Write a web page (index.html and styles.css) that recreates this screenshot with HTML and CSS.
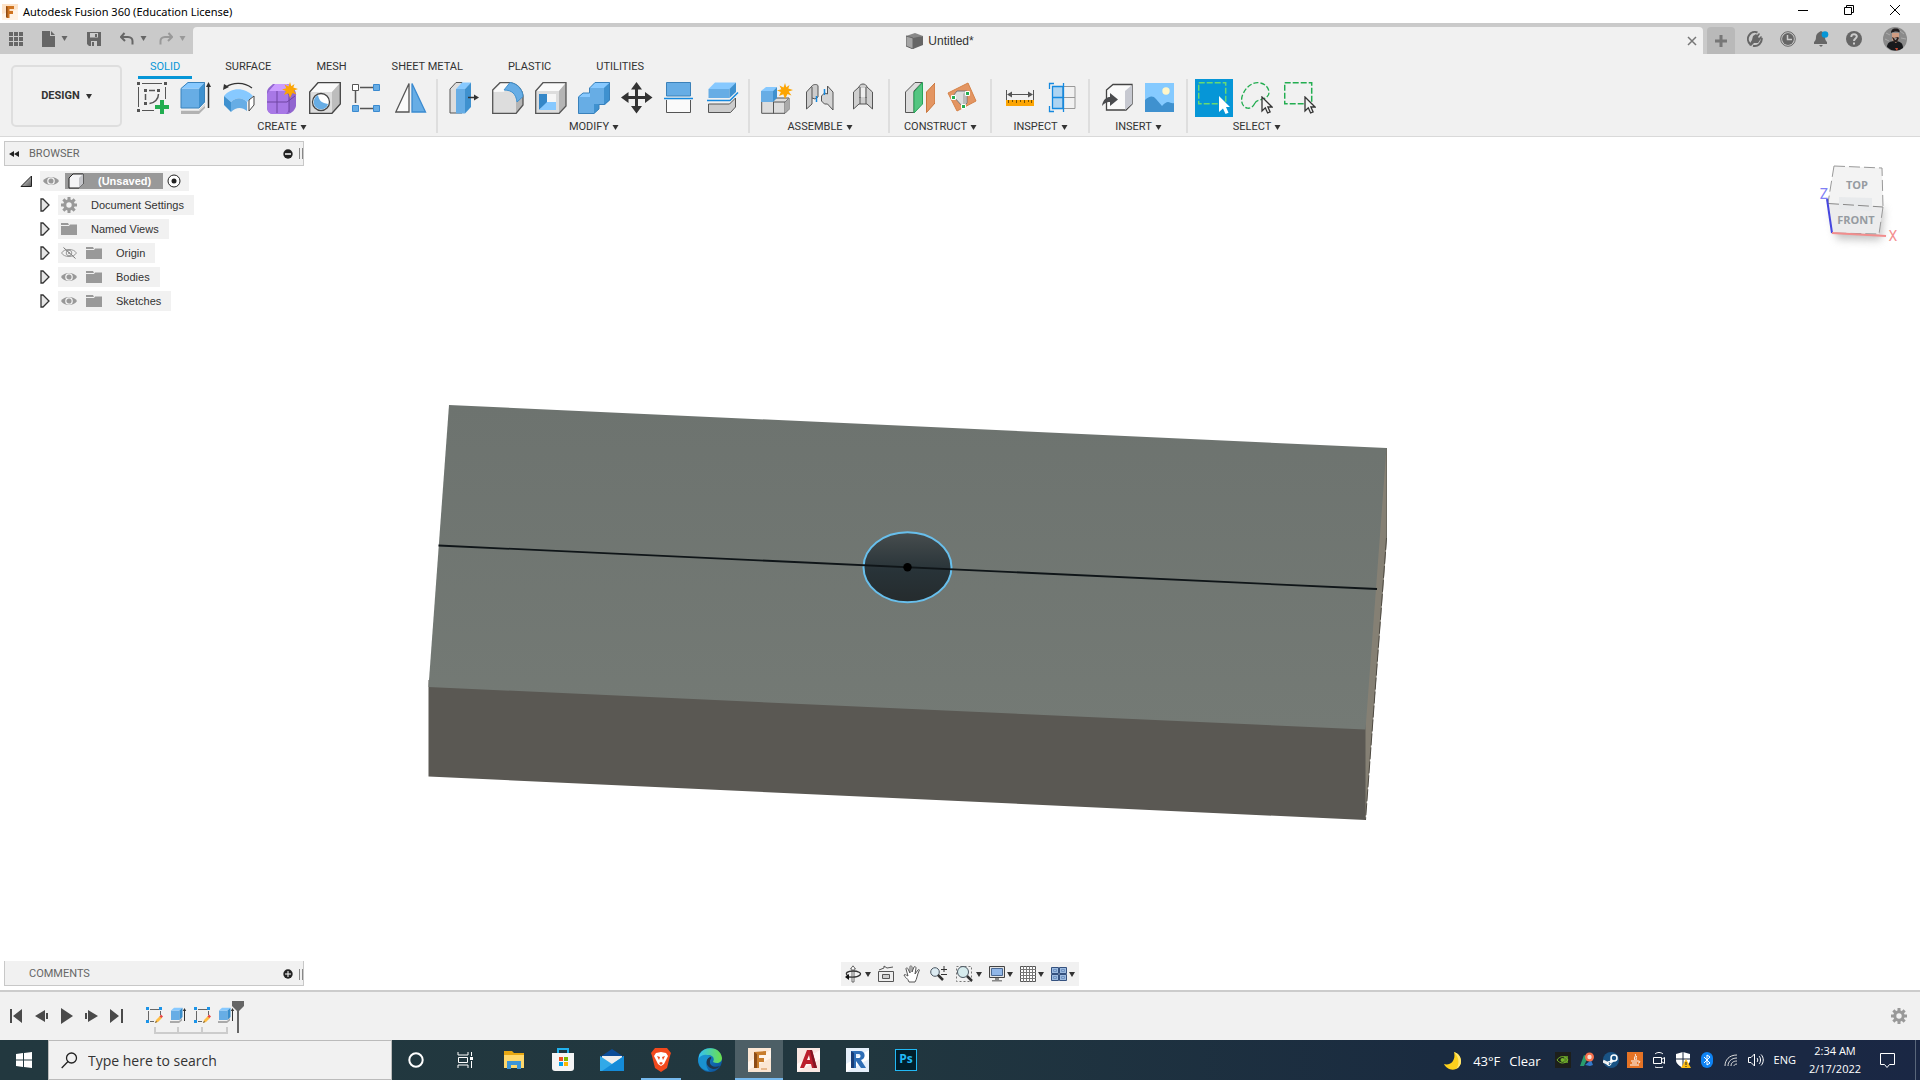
FILE: index.html
```html
<!DOCTYPE html>
<html lang="en">
<head>
<meta charset="utf-8">
<title>Autodesk Fusion 360 (Education License)</title>
<link rel="stylesheet" href="styles.css">
</head>
<body>
<svg class="defs" aria-hidden="true">
  <defs>
    <linearGradient id="triangleFill" x1="0" y1="0" x2="1" y2="1"><stop offset="0" stop-color="#eee"/><stop offset="1" stop-color="#555"/></linearGradient>
    <linearGradient id="topFace" x1="0" y1="0" x2="0" y2="1"><stop offset="0" stop-color="#6d736f"/><stop offset="1" stop-color="#747a75"/></linearGradient>
    <linearGradient id="holeFill" x1="0" y1="0" x2="0" y2="1"><stop offset="0" stop-color="#474d4e"/><stop offset="0.55" stop-color="#283338"/><stop offset="1" stop-color="#252b2d"/></linearGradient>
    <linearGradient id="edgeGreen" x1="0" y1="0" x2="1" y2="0"><stop offset="0" stop-color="#35c1f1"/><stop offset="1" stop-color="#6be04a"/></linearGradient>
    <linearGradient id="edgeBlue" x1="0" y1="0" x2="1" y2="1"><stop offset="0" stop-color="#1a9be0"/><stop offset="1" stop-color="#0c4a92"/></linearGradient>
  </defs>
  <symbol id="caret" viewBox="0 0 6 5"><path d="M0 0h6L3 5z" fill="currentColor"/></symbol>
  <symbol id="eye" viewBox="0 0 16 12"><path d="M0 6C3 .8 13 .8 16 6 13 11.200 3 11.200 0 6z" fill="#999"/><circle cx="8" cy="6" r="3.200" fill="none" stroke="#f1f1f1" stroke-width="1.300"/></symbol>
  <symbol id="eye-off" viewBox="0 0 16 12"><path d="M.6 6C3 1.300 13 1.300 15.400 6 13 10.700 3 10.700.6 6z" fill="none" stroke="#999"/><circle cx="8" cy="6" r="2.800" fill="none" stroke="#999"/><circle cx="8" cy="6" r="1" fill="#999"/><path d="M2.500.5l12 11" stroke="#777"/></symbol>
  <symbol id="folder" viewBox="0 0 16 14"><path d="M0 1h7l1 2H0zM0 4h8l1-1.500h7V13H0z" fill="#999"/></symbol>
  <symbol id="gear" viewBox="0 0 16 16"><g fill="#999"><path d="M6.500 0h3v16h-3zM0 6.500h16v3H0z"/><path d="M6.500 0h3v16h-3zM0 6.500h16v3H0z" transform="rotate(45 8 8)"/><circle cx="8" cy="8" r="5.700"/></g><circle cx="8" cy="8" r="2.700" fill="#f1f1f1"/></symbol>
  <symbol id="twisty" viewBox="0 0 10 14"><path d="M1 1h2l6 6-6 6H1z" fill="#e6e6e6" stroke="#333" stroke-width="1.300"/></symbol>
  <symbol id="burst" viewBox="0 0 16 16"><path d="M8 0l1.300 4.300L12.500 2l-1.200 3.600L16 7l-4.300 1.500 2.800 4-4-1.600L8 16l-1.700-4.800L2 13l1.900-4L0 7.500l4.300-1.300L2.500 2.500l4 1.900z" fill="#fca503"/></symbol>
  <symbol id="pointer" viewBox="0 0 12 18"><path d="M1 1v14l3.300-3.200L6.600 17l2.500-1.100L6.900 11H11z" fill="#f3f3f3" stroke="#333" stroke-width="1.300"/></symbol>
  <symbol id="sketch-small" viewBox="0 0 17 17"><path d="M2.500 4v9M4 2.500h9M14.500 4v4M4 14.500h4" stroke="#666" fill="none"/><path d="M0 0h3v3H0zM13 0h3v3h-3zM0 13h3v3H0z" fill="#1c94e8"/><path d="M9 16l1-3 4-4 2 2-4 4z" fill="#ffbd42"/><path d="M13.500 9.500l1.500-2 2 2-1.500 1.500z" fill="#e84343"/><path d="M9 16l1-2 1 1z" fill="#444"/></symbol>
  <symbol id="extrude-small" viewBox="0 0 17 17"><path d="M0 16v-2h9l3-3v2.500L9 16z" fill="#aaa"/><path d="M1 3.500h8.500V13H1z" fill="#67ade5"/><path d="M1 3.500L4 .7h8.500l-3 2.800z" fill="#87c9ff"/><path d="M9.500 3.500l3-2.800V10l-3 3z" fill="#388dcc"/><path d="M14.500 14V3" stroke="#333"/><path d="M12.800 4l1.700-3 1.700 3z" fill="#333"/></symbol>
</svg>

<header class="titlebar">
  <svg width="16" height="16" viewBox="0 0 16 16"><path fill="#fde3c9" d="M0 0h16v16H0z"/><path fill="#fff3e6" d="M0 10l16-5v11H0z"/><path fill="#cf7421" d="M4 2h8v3H7.500v2H11v3H7.500v4H4.500z"/><path fill="#8e4a13" d="M4 2l1.500 1v11L4 13z"/></svg>
  <h1>Autodesk Fusion 360 (Education License)</h1>
  <div class="window-controls">
    <button aria-label="Minimize"><svg width="12" height="12"><path d="M1 6.500h10" stroke="#000"/></svg></button>
    <button aria-label="Restore"><svg width="12" height="12"><path d="M1.500 3.500h7v7h-7zM3.500 3V1.500h7v7H9" fill="none" stroke="#000"/></svg></button>
    <button aria-label="Close"><svg width="12" height="12"><path d="M1 1l10 10M11 1L1 11" stroke="#000"/></svg></button>
  </div>
</header>

<div class="appbar">
  <nav class="quick">
    <button aria-label="Data panel"><svg width="14" height="14" fill="#666"><path d="M0 0h4v4H0zM5 0h4v4H5zM10 0h4v4h-4zM0 5h4v4H0zM5 5h4v4H5zM10 5h4v4h-4zM0 10h4v4H0zM5 10h4v4H5zM10 10h4v4h-4z"/></svg></button>
    <button aria-label="File"><svg width="13" height="16" fill="#666"><path d="M0 0h8v5h5v11H0zM9 0l4 4H9z"/></svg><svg class="caret" width="7" height="5"><use href="#caret"/></svg></button>
    <button aria-label="Save"><svg width="14" height="14"><path d="M0 0h14v14H2l-2-2z" fill="#666"/><path d="M3 1h8v4.500H3zM4 9h6v5H4z" fill="#ccc"/><path d="M8 2h2v3H8zM5 10h2v4H5z" fill="#666"/></svg></button>
    <button aria-label="Undo"><svg width="14" height="13"><path d="M4.500 1L1 5l4 4M1.500 5H8c3 0 4.500 2 4.500 4v3.500" fill="none" stroke="#666" stroke-width="2"/></svg><svg class="caret" width="7" height="5"><use href="#caret"/></svg></button>
    <button aria-label="Redo" class="dim"><svg width="14" height="13"><path d="M9.500 1L13 5 9 9M12.500 5H6c-3 0-4.500 2-4.500 4v3.500" fill="none" stroke="#999" stroke-width="2"/></svg><svg class="caret" width="7" height="5"><use href="#caret"/></svg></button>
  </nav>
  <div class="doc-tab">
    <div class="doc-name"><svg width="17" height="16" viewBox="0 0 17 16"><path d="M0 3L9 0l8 3-8 3z" fill="#888"/><path d="M0 3l7 2v11l-7-3z" fill="#a5a5a5" stroke="#666"/><path d="M7 5l10-2v9l-10 4z" fill="#666"/></svg><span>Untitled*</span></div>
    <button aria-label="Close document"><svg width="10" height="10"><path d="M1 1l8 8M9 1L1 9" stroke="#777" stroke-width="1.500"/></svg></button>
  </div>
  <button class="new-tab" aria-label="New design"><svg width="14" height="14"><path d="M7 1v12M1 7h12" stroke="#777" stroke-width="3"/></svg></button>
  <nav class="account">
    <button aria-label="Extensions"><svg width="16" height="16" viewBox="0 0 16 16"><path d="M10.500 1.500A7 7 0 0 0 3 13M6 14.700A7 7 0 0 0 14.700 7" fill="none" stroke="#666" stroke-width="2"/><path d="M2 14l3-5 1-4 3-2 1 1 2-2 1 1-2 3 1 1 2-2 1 1-2 3-2 3-4 0-3 3z" fill="#666"/></svg></button>
    <button aria-label="Job status"><svg width="16" height="16"><circle cx="8" cy="8" r="7.300" fill="none" stroke="#666"/><circle cx="8" cy="8" r="5.900" fill="#666"/><path d="M7.500 4v4.500H12" fill="none" stroke="#ccc" stroke-width="1.500"/></svg></button>
    <button aria-label="Notifications"><svg width="16" height="16"><path d="M8 0c3 1 4 3 4 6 0 3 1 4 2 5v2H1v-2c1-1 2-2 2-5 0-3 2-4.500 5-6zM6 14h4l-2 2z" fill="#666"/><circle cx="12" cy="3.500" r="3.300" fill="#0696d7"/></svg></button>
    <button aria-label="Help"><svg width="16" height="16"><circle cx="8" cy="8" r="8" fill="#666"/><path d="M5.300 6c0-4 5.500-3.500 5.500-.4C10.800 7.500 8 7.500 8 10M8 11.500v2" fill="none" stroke="#ccc" stroke-width="2"/></svg></button>
    <button aria-label="Profile"><svg width="24" height="24" viewBox="0 0 24 24"><circle cx="12" cy="12" r="12" fill="#8a8a8a"/><path d="M3 6l4 2M17 4l4 3M18 11l5 1M2 12l4 2" stroke="#aaa"/><path d="M4 20c0-4 3-6 8-6s8 2 8 7a12 12 0 0 1-16-1z" fill="#18191c"/><path d="M9 6h7v6l-3 4-4-3z" fill="#cf9c82"/><path d="M8 6c0-4 3-5 5-4.500 3 0 4 2 3.500 4-2-1.500-5-1.500-8.500.5z" fill="#211d1e"/><path d="M9 10l2 1 4-1 1 1-2 4h-3z" fill="#2b2220"/><path d="M11 11.500h3l-1 1h-1z" fill="#fff"/><path d="M12 21l3 0-1 3z" fill="#ca4a32"/></svg></button>
  </nav>
</div>

<section class="ribbon">
  <button class="workspace">DESIGN<svg class="caret" width="6" height="5"><use href="#caret"/></svg></button>
  <div class="ribbon-main">
    <nav class="tabs">
      <button class="current">SOLID</button><button>SURFACE</button><button>MESH</button><button>SHEET METAL</button><button>PLASTIC</button><button>UTILITIES</button>
    </nav>
    <div class="groups">
      <div class="group">
        <div class="tools">
          <button aria-label="Create sketch"><svg width="32" height="32"><path d="M5 1.500h20M1.500 5v20M28.500 5v12M5 28.500h12" stroke="#555" fill="none"/><path d="M0 0h3v3H0zM27 0h3v3h-3zM0 27h3v3H0zM7 7h3v3H7zM20 7h3v3h-3zM7 20h3v3H7z" fill="#555"/><path d="M12 8.500h6M8.500 12v6M21.500 12c0 5-4 9-9 9.500" stroke="#555" stroke-width="1.500" fill="none"/><path d="M23 18h4v5h5v4h-5v5h-4v-5h-5v-4h5z" fill="#22ad50"/></svg></button>
          <button aria-label="Extrude"><svg width="32" height="32"><path d="M1 32v-4h18l6-6v4l-6 6z" fill="#b2b2b2"/><path d="M1 28h18l6-6v2l-6 5H1z" fill="#e0e0e0"/><path d="M1 6.500h18V26H1z" fill="#67ade5"/><path d="M1 6.500L8 0h17l-6 6.500z" fill="#87c9ff"/><path d="M19 6.500L25 0v20l-6 6z" fill="#3f91cf"/><path d="M1 6.500L8 .5h16.500V20L19 26H1z" fill="none" stroke="#3a82bb"/><path d="M28.500 26V4" stroke="#333" stroke-width="1.500"/><path d="M26 5l2.500-5L31 5z" fill="#333"/></svg></button>
          <button aria-label="Revolve"><svg width="32" height="32"><path d="M1 14c7-9 21-9 29 0l-6 6c-5-5-11-5-16 0z" fill="#87c9ff"/><path d="M1 14l7 6v10l-7-7z" fill="#3f91cf"/><path d="M8 20c5-5 11-5 16 0v9c-5-4-11-4-16 1z" fill="#67ade5"/><path d="M26 18l5-4v9l-5 6z" fill="#fff" stroke="#444"/><path d="M3 5c7-5 18-5 26 1" fill="none" stroke="#333" stroke-width="1.300"/><path d="M0 8l1-6 5 3z" fill="#333"/></svg></button>
          <button aria-label="Create form"><svg width="32" height="32"><path d="M1 10c0-2 1-4 6-8h15c7 4 8 8 8 11v11c-1 4-4 7-8 8H7c-4 0-6-3-6-7z" fill="#9165cf"/><path d="M1 12l2-3h17l3 3v16l-3 4H7c-4 0-6-3-6-7z" fill="#a878e6"/><path d="M3 9l6-7h12l4 2-5 5z" fill="#cb9dff"/><path d="M11 9v22M1 20h20l8-6M20 9l3 4v17" fill="none" stroke="#6e45a2"/><use href="#burst" x="16" y="0" width="16" height="16"/></svg></button>
          <button aria-label="Hole"><svg width="32" height="32"><path d="M.7 10L9 .7h22.300V22L23 31.300H.7z" fill="#ddd"/><path d="M.7 10L9 .7h22.300L23 10z" fill="#fafafa"/><path d="M23 10l8.300-9.300V22L23 31.300z" fill="#bdbdbd"/><path d="M.7 10L9 .7h22.300V22L23 31.300H.7z" fill="none" stroke="#444" stroke-width="1.300"/><circle cx="12" cy="20" r="8.500" fill="#fff" stroke="#444" stroke-width="1.300"/><path d="M9 13c1 6 4 8 10 9-2 8-13 6-14 0-1-5 2-8 4-9z" fill="#67ade5"/></svg></button>
          <button aria-label="Pattern"><svg width="32" height="32"><path d="M8 5.500h13M3.500 9v12M8 26.500h13" stroke="#555" stroke-width="1.500"/><path d="M.5 2.500h6v6h-6z" fill="#fff" stroke="#555"/><path d="M21.500 2.500h6v6h-6zM21.500 23.500h6v6h-6zM.5 23.500h6v6h-6z" fill="#67ade5" stroke="#3a8ad0"/></svg></button>
          <button aria-label="Mirror"><svg width="32" height="32"><path d="M14 1.500V30H.8z" fill="#fafafa" stroke="#555" stroke-width="1.300"/><path d="M17 1.500V30h13.500z" fill="#67ade5" stroke="#3a8ad0" stroke-width="1.300"/></svg></button>
        </div>
        <button class="menu">CREATE<svg class="caret" width="7" height="5"><use href="#caret"/></svg></button>
      </div>
      <div class="group">
        <div class="tools">
          <button aria-label="Press pull"><svg width="32" height="32"><path d="M1 7l6-6.500h6V31H1z" fill="#ddd" stroke="#555"/><path d="M7 7h9v24.500H7z" fill="#67ade5"/><path d="M7 7l6-6.500h9L16 7z" fill="#87c9ff"/><path d="M16 7l6-6.500V25l-6 6.500z" fill="#3f91cf"/><path d="M19 15.500h7" stroke="#333" stroke-width="1.500"/><path d="M25 12.500l5 3-5 3z" fill="#333"/></svg></button>
          <button aria-label="Fillet"><svg width="32" height="32"><path d="M.7 10L9 .7h10C28 2 31 10 31 14v9l-7 8.500H.7z" fill="#ddd"/><path d="M.7 10L9 .7h10l-7 9z" fill="#fafafa"/><path d="M24 20l7-9v12l-7 8.500z" fill="#b5b5b5"/><path d="M.7 8L8 .7h10C27 2 31 10 31 14v9l-7 8.500H.7z" fill="none" stroke="#555" stroke-width="1.300"/><path d="M12 8l6-7.500c8 1 13 8 13 14L25 20C24 12 20 8 12 8z" fill="#67ade5" stroke="#3f91cf"/></svg></button>
          <button aria-label="Shell"><svg width="32" height="32"><path d="M.7 9L8 .7h23V24l-7 7.500H.7z" fill="#ddd"/><path d="M.7 9L8 .7h23L24 9z" fill="#fafafa"/><path d="M24 9l7-8.300V24l-7 7.500z" fill="#b5b5b5"/><path d="M.7 9L8 .7h23V24l-7 7.500H.7z" fill="none" stroke="#555" stroke-width="1.300"/><path d="M4 12h17v16H4z" fill="#f6f6f6"/><path d="M4 12h8v9l-8 7z" fill="#3487c8"/><path d="M4 28l8-8h9v8z" fill="#87c9ff"/></svg></button>
          <button aria-label="Combine"><svg width="32" height="32"><path d="M0 15l5-4h7V6l5-5.500h15V18l-5 5h-6v4l-5 4.500H0z" fill="#67ade5"/><path d="M0 15l5-4h7v4zM12 6l5-5.500h15L26 6z" fill="#87c9ff"/><path d="M26 6l6-5.500V18l-6 5zM16 27v-5h5v5l-5 4.500z" fill="#3f91cf"/><path d="M.5 15L5 11h6.500V6L17 .5h14.500V18L26 22.500h-5V27l-5 4.500H.5z" fill="none" stroke="#3981bb"/></svg></button>
          <button aria-label="Move"><svg width="32" height="32"><path d="M15.500 5v22M5 15.500h22" stroke="#333" stroke-width="3"/><path d="M10 7.500L15.500 0 21 7.500zM10 24l5.500 7.500L21 24zM7.500 10L0 15.500 7.500 21zM24 10l7.500 5.500L24 21z" fill="#333"/></svg></button>
          <button aria-label="Split face"><svg width="32" height="32"><path d="M2.500.5h24V14h-24z" fill="#67ade5" stroke="#3b81b9"/><path d="M2.500 18v12.500h24V18" fill="#fafafa" stroke="#555"/><path d="M0 16.500h29" stroke="#1489df" stroke-width="1.500"/></svg></button>
          <button aria-label="Split body"><svg width="32" height="32"><path d="M1.500 22h21l6-6v9l-5 5.500h-22z" fill="#ccc" stroke="#555"/><path d="M1.500 7h21v9h-21z" fill="#67ade5"/><path d="M1.500 7L8 .5h21L23 7z" fill="#87c9ff"/><path d="M22.500 7L29 .5V10l-6.500 6z" fill="#3f91cf"/><path d="M0 18.500h23l8-8" stroke="#1489df" fill="none" stroke-width="1.500"/></svg></button>
        </div>
        <button class="menu">MODIFY<svg class="caret" width="7" height="5"><use href="#caret"/></svg></button>
      </div>
      <div class="group">
        <div class="tools">
          <button aria-label="New component"><svg width="32" height="32"><path d="M.7 19v12.300H24l4-4V16H13z" fill="#ddd" stroke="#555"/><path d="M12.500 19.500v12M12.500 20H24v11M24 20l4-4" stroke="#555" fill="none"/><path d="M24 20l4-4v11l-4 4z" fill="#aaa"/><path d="M0 9h12v11H0z" fill="#67ade5"/><path d="M0 9l5-4h11l-4 4z" fill="#87c9ff"/><path d="M12 9l4-4v11l-4 4z" fill="#3f91cf"/><use href="#burst" x="16" y="1" width="16" height="16"/></svg></button>
          <button aria-label="Joint"><svg width="32" height="32"><path d="M2.500 10L8 4c1-2 6-2 6 0v11l-3 2-3-1v6l-5.500 5z" fill="#ccc" stroke="#555"/><path d="M8 5v11M17.500 14l3-3 3 1V4l5.500 6v18l-5.500-6h-3l-3-3z" fill="#d4d4d4" stroke="#555"/><path d="M12.500 14v6M20.500 7v6" stroke="#1489df" stroke-width="1.500"/></svg></button>
          <button aria-label="As-built joint"><svg width="32" height="32"><path d="M6.500 10L12 5c1-4 7-4 8 0l5.500 5v17L20 22h-8l-5.500 5z" fill="#cfcfcf" stroke="#555"/><path d="M13 5v11M19 5v11M13 15v7M19 15v7" stroke="#555"/><path d="M14 6h4v9h-4z" fill="#eee"/></svg></button>
        </div>
        <button class="menu">ASSEMBLE<svg class="caret" width="7" height="5"><use href="#caret"/></svg></button>
      </div>
      <div class="group wide">
        <div class="tools">
          <button aria-label="Offset plane"><svg width="32" height="32"><path d="M2.500 10L12 .5h7L11 9v21.500H2.500z" fill="#ddd" stroke="#555"/><path d="M11 10l8.500-9.500V22L11 31z" fill="#54c581" stroke="#25a557"/><path d="M23.500 10L32 1v20l-8.500 9.500z" fill="#e39562" stroke="#c9753b"/></svg></button>
          <button aria-label="Plane through points"><svg width="32" height="32"><path d="M2 11L22 1l8 18-19 10z" fill="#e39562" stroke="#d58247"/><path d="M7 14l4-5h10v12l-4 4z" fill="#ddd" stroke="#777"/><path d="M20 9v12l-3 4V12z" fill="#bbb"/><path d="M5.500 13.500h4v4h-4zM19.500 9.500h4v4h-4zM15.500 22.500h4v4h-4z" fill="#25ad50" stroke="#fff"/></svg></button>
        </div>
        <button class="menu">CONSTRUCT<svg class="caret" width="7" height="5"><use href="#caret"/></svg></button>
      </div>
      <div class="group pair">
        <div class="tools">
          <button aria-label="Measure"><svg width="32" height="32"><path d="M3.500 8v10M30.500 8v10M6 12.500h22" stroke="#555"/><path d="M4 12.500l5-3v6zM30 12.500l-5-3v6z" fill="#555"/><path d="M3 18h28v6H3z" fill="#fca503"/><path d="M5.500 18v3M9.500 18v2M13.500 18v3M17.500 18v2M21.500 18v3M25.500 18v2M28.500 18v3" stroke="#765000"/></svg></button>
          <button aria-label="Section analysis"><svg width="32" height="32"><path d="M6.500 4.500H17V27H6.500z" fill="#add4f2"/><path d="M17 4.500h12v22H17zM17 15.500h12" fill="none" stroke="#999"/><path d="M8 1.500H3.500V7M8 29.500H3.500V24M6.500 4.500H17v22H6.500zM6.500 15.500H17M17.500 1v29" fill="none" stroke="#1489df" stroke-width="1.300"/></svg></button>
        </div>
        <button class="menu">INSPECT<svg class="caret" width="7" height="5"><use href="#caret"/></svg></button>
      </div>
      <div class="group pair">
        <div class="tools">
          <button aria-label="Insert derive"><svg width="32" height="32"><path d="M5.500 8L12 2.500h19V22l-6 6H5.500z" fill="#fafafa" stroke="#444" stroke-width="1.300"/><path d="M24 9l7-6v19l-7 6z" fill="#c7c9d1"/><path d="M1 24c1-7 5-9 8-9v-4l8 6.500L9 24v-4c-4 0-5 1-8 4z" fill="#4a4b4e"/></svg></button>
          <button aria-label="Canvas"><svg width="32" height="32"><path d="M1 1h29v29H1z" fill="#85caff"/><circle cx="22" cy="9" r="3.700" fill="#fff6c9"/><path d="M1 18c4-4 8-5 11-1l6 7c3-3 4-4 6-4s4 2 6 1v9H1z" fill="#3f91cf"/></svg></button>
        </div>
        <button class="menu">INSERT<svg class="caret" width="7" height="5"><use href="#caret"/></svg></button>
      </div>
      <div class="group last">
        <div class="tools">
          <button class="chosen" aria-label="Select"><svg width="32" height="32"><path d="M.7.7h27v21H.7z" fill="none" stroke="#69da72" stroke-width="1.500" stroke-dasharray="6 2"/><path d="M21 14v16l4-3.500 2.500 5.500 3-1.300L28 25h4z" fill="#fff"/></svg></button>
          <button aria-label="Freeform select"><svg width="32" height="32"><path d="M14 21c-2 4-5 6-8 5-5-1-7-8-4-14C5 5 11 .5 17 .7c7 .3 11 5 11 10 0 3-3 6-8 7-3 1-5 1-6 3.300z" fill="none" stroke="#22ad50" stroke-width="1.300" stroke-dasharray="5 2"/><use href="#pointer" x="20" y="14" width="12" height="18"/></svg></button>
          <button aria-label="Window select"><svg width="32" height="32"><path d="M.7.7h27v21H.7z" fill="none" stroke="#22ad50" stroke-width="1.500" stroke-dasharray="6 2"/><use href="#pointer" x="20" y="14" width="12" height="18"/></svg></button>
        </div>
        <button class="menu">SELECT<svg class="caret" width="7" height="5"><use href="#caret"/></svg></button>
      </div>
    </div>
  </div>
</section>

<main class="viewport">
  <svg class="model" viewBox="0 137 1920 853" role="img" aria-label="Block with centre hole">
    <path d="M1386 448l1 90-21.500 282-8-91z" fill="#858074"/>
    <path d="M1386.500 448v90" stroke="#6d6a60"/>
    <path d="M1386.500 538l-21 282" fill="none" stroke="#4e4a42" stroke-dasharray="12 2"/>
    <path d="M428.500 680H1364.500L1365.500 729.500V820L428.500 776.500z" fill="#5a5853"/>
    <path d="M449 405L1386.500 448 1365.500 729.500 428.500 687z" fill="url(#topFace)"/>
    <ellipse cx="907.500" cy="567.300" rx="44" ry="35" fill="url(#holeFill)" stroke="#68bfec" stroke-width="2"/>
    <path d="M438.500 545.500L1377 589" stroke="#0f1518" stroke-width="1.800"/>
    <circle cx="907.500" cy="567.300" r="4.200" fill="#000"/>
  </svg>

  <svg class="viewcube" width="90" height="90" role="img" aria-label="View cube">
    <defs><filter id="soft" x="-30%" y="-30%" width="160%" height="160%"><feGaussianBlur stdDeviation="4"/></filter></defs>
    <path d="M16 50l53-2-3 32-44-1z" fill="#999" opacity=".6" filter="url(#soft)"/>
    <path d="M19 6l48 2 1 39-55-4z" fill="#f3f3f3"/>
    <path d="M13 43l55 4-4 27-47-1z" fill="#ececed"/>
    <path d="M24 37l33 1v13l-33-2z" fill="#e8eaec"/>
    <path d="M19 6l48 2 1 39M19 6l-6 37M68 47l-4 27-47-1" fill="none" stroke="#999" stroke-dasharray="11 4"/>
    <path d="M13 43.500l55 3.500" stroke="#888" stroke-dasharray="11 4"/>
    <path d="M12 39l5 34" stroke="#4747df" stroke-width="2"/>
    <path d="M17 73l54 3" stroke="#f28d8d" stroke-width="2"/>
    <g text-anchor="middle"><text x="42" y="29" class="cube-face">TOP</text><text x="41" y="64" class="cube-face">FRONT</text><text x="9" y="39" class="axis-z">Z</text><text x="78" y="81" class="axis-x">X</text></g>
  </svg>

  <aside class="browser">
    <div class="panel-head">
      <svg width="11" height="8"><path d="M5 1v6L0 4zM10 1v6L5 4z" fill="#222"/></svg><h2>BROWSER</h2>
      <button aria-label="Hide browser"><svg width="10" height="10"><circle cx="5" cy="5" r="4.700" fill="#222"/><path d="M2 5h6" stroke="#fff" stroke-width="1.500"/></svg></button><i class="grip"></i>
    </div>
    <ul class="tree">
      <li class="root"><svg width="12" height="12"><path d="M11.500 1v10.500H1z" fill="url(#triangleFill)" stroke="#222"/></svg>
        <span class="node"><svg width="16" height="12"><use href="#eye"/></svg>
          <strong><svg width="16" height="16"><path d="M1 5l4-4h10v10l-4 4H1z" fill="#f4f4f6" stroke="#222"/><path d="M11 5l4-4v10l-4 4z" fill="#c5c6ca"/></svg>(Unsaved)</strong>
          <svg width="14" height="14"><circle cx="7" cy="7" r="6" fill="#fff" stroke="#222"/><circle cx="7" cy="7" r="2.500" fill="#222"/></svg></span></li>
      <li><svg width="10" height="14"><use href="#twisty"/></svg><span class="node"><svg width="16" height="16"><use href="#gear"/></svg>Document Settings</span></li>
      <li><svg width="10" height="14"><use href="#twisty"/></svg><span class="node"><svg width="16" height="14"><use href="#folder"/></svg>Named Views</span></li>
      <li><svg width="10" height="14"><use href="#twisty"/></svg><span class="node"><svg width="16" height="12"><use href="#eye-off"/></svg><svg width="16" height="14"><use href="#folder"/></svg>Origin</span></li>
      <li><svg width="10" height="14"><use href="#twisty"/></svg><span class="node"><svg width="16" height="12"><use href="#eye"/></svg><svg width="16" height="14"><use href="#folder"/></svg>Bodies</span></li>
      <li><svg width="10" height="14"><use href="#twisty"/></svg><span class="node"><svg width="16" height="12"><use href="#eye"/></svg><svg width="16" height="14"><use href="#folder"/></svg>Sketches</span></li>
    </ul>
  </aside>

  <div class="bottom">
    <div class="panel-head comments"><h2>COMMENTS</h2>
      <button aria-label="Show comments"><svg width="10" height="10"><circle cx="5" cy="5" r="4.700" fill="#222"/><path d="M2 5h6M5 2v6" stroke="#fff"/></svg></button><i class="grip"></i></div>
    <nav class="navbar">
      <button class="spaced" aria-label="Orbit"><svg width="18" height="18"><path d="M8 17V4H6.500L9 .8 11.500 4H10v13z" stroke="#666" fill="#fff"/><path d="M4 11C0 8 4 6 9 6s9 2 7 4-5 2.500-11 2" fill="none" stroke="#333" stroke-width="1.300"/><path d="M1 12l4-3v6z" fill="#111"/></svg><svg class="caret" width="6" height="5"><use href="#caret"/></svg></button>
      <button aria-label="Look at"><svg width="18" height="18"><path d="M1.500 6.500h15v10h-15zM2 5l5-2V1l3 2 6-1" fill="#eee" stroke="#555"/><path d="M5.500 9.500h7v4h-7z" fill="#ccc" stroke="#555"/></svg></button>
      <button aria-label="Pan"><svg width="18" height="18"><path d="M6 17c-1-4-5-5-5-7 1-1 2 0 4 1L3 4c0-2 2-1 2 0l2 4V2c0-2 2-1 2 0v5l2-5c1-1 2 0 2 1l-1 6 3-4c1-1 2 0 1 1-2 4-2 8-4 11z" fill="#fff" stroke="#555"/></svg></button>
      <button aria-label="Zoom"><svg width="18" height="18"><circle cx="6" cy="7" r="4.300" fill="#dcebf2" stroke="#4b5661"/><path d="M9 10l5 5" stroke="#333" stroke-width="2.500"/><path d="M12 4.500h6M15 1v6M12 9.500h6" stroke="#333"/></svg></button>
      <button class="fit" aria-label="Fit"><svg width="18" height="18"><path d="M1.500 1.500h15v15h-15z" fill="none" stroke="#777" stroke-dasharray="2 2"/><circle cx="8" cy="7" r="5.500" fill="#d6ebed" stroke="#4b5661"/><path d="M12 11l5 5" stroke="#333" stroke-width="2.500"/></svg><svg class="caret" width="6" height="5"><use href="#caret"/></svg></button>
      <button aria-label="Display settings"><svg width="18" height="18"><path d="M1.500 1.500h15v11h-15z" fill="#e4e4e4" stroke="#444"/><path d="M3.500 3.500h11v7h-11z" fill="#91b7e8" stroke="#4b6a95"/><path d="M7 13h4v2h3v1.500H4V15h3z" fill="#888"/></svg><svg class="caret" width="6" height="5"><use href="#caret"/></svg></button>
      <button aria-label="Grid"><svg width="18" height="18"><path d="M1.500 1.500h15v15h-15z" fill="#fff" stroke="#555"/><path d="M4.500 1v16M7.500 1v16M10.500 1v16M13.500 1v16M1 4.500h16M1 7.500h16M1 10.500h16M1 13.500h16" stroke="#777"/></svg><svg class="caret" width="6" height="5"><use href="#caret"/></svg></button>
      <button aria-label="Viewports"><svg width="18" height="18"><path d="M1.500 2.500h7v6h-7zM9.500 2.500h7v6h-7zM1.500 9.500h7v6h-7zM9.500 9.500h7v6h-7z" fill="#9dbbe0" stroke="#34517f"/><path d="M3.500 4.500h3v2h-3zM11.500 4.500h3v2h-3zM3.500 11.500h3v2h-3zM11.500 11.500h3v2h-3z" fill="none" stroke="#6f92c2"/></svg><svg class="caret" width="6" height="5"><use href="#caret"/></svg></button>
    </nav>
  </div>
</main>

<footer class="timeline">
  <nav class="playback">
    <button aria-label="Start"><svg width="13" height="14" fill="#4a4a4a"><path d="M0 0h2v14H0zM12 0v14L3 7z"/></svg></button>
    <button aria-label="Previous"><svg width="13" height="14" fill="#4a4a4a"><path d="M10 1v12L0 7zM11 4h2v6h-2z"/></svg></button>
    <button aria-label="Play"><svg width="13" height="16" fill="#4a4a4a"><path d="M1 0l12 8L1 16z"/></svg></button>
    <button aria-label="Next"><svg width="13" height="14" fill="#4a4a4a"><path d="M3 1v12l10-6zM0 4h2v6H0z"/></svg></button>
    <button aria-label="End"><svg width="13" height="14" fill="#4a4a4a"><path d="M11 0h2v14h-2zM0 0v14l9-7z"/></svg></button>
  </nav>
  <div class="features">
    <div class="steps">
      <button aria-label="Sketch1"><svg width="17" height="17"><use href="#sketch-small"/></svg></button>
      <button aria-label="Extrude1"><svg width="17" height="17"><use href="#extrude-small"/></svg></button>
      <button aria-label="Sketch2"><svg width="17" height="17"><use href="#sketch-small"/></svg></button>
      <button aria-label="Extrude2"><svg width="17" height="17"><use href="#extrude-small"/></svg></button>
    </div>
    <svg width="96" height="7"><path d="M13 0v6h72V0M36 0v6M60 0v6" fill="none" stroke="#ccc" stroke-width="2"/></svg>
    <svg class="playhead" width="12" height="32"><path d="M0 0h12v5L7 10v22H5V10L0 5z" fill="#666"/></svg>
  </div>
  <button class="settings" aria-label="Timeline settings"><svg width="16" height="16"><use href="#gear"/></svg></button>
</footer>

<div class="taskbar">
  <button class="start" aria-label="Start menu"><svg width="16" height="16" fill="#fff"><path d="M0 2l7-1v6.500H0zM8 1l8-1v7.500H8zM0 8.500h7V15l-7-1zM8 8.500h8V16l-8-1z"/></svg></button>
  <label class="search"><svg width="17" height="17"><circle cx="10.500" cy="6" r="5" fill="none" stroke="#222" stroke-width="1.300"/><path d="M7 9.500L.7 16" stroke="#222" stroke-width="1.300"/></svg><input type="text" placeholder="Type here to search" aria-label="Search"></label>
  <nav class="apps">
    <button aria-label="Cortana"><svg width="16" height="16"><circle cx="8" cy="8" r="6.700" fill="none" stroke="#fff" stroke-width="2"/></svg></button>
    <button aria-label="Task view"><svg width="16" height="16" fill="none" stroke="#fff"><path d="M1 0v3h10V0M1 16v-3h10v3M1.500 5.500h9v5h-9zM14.500 0v4M14.500 9v7"/><path d="M13 5h3v3h-3z" fill="#fff" stroke="none"/></svg></button>
    <button aria-label="File Explorer"><svg width="22" height="20"><path d="M1 1h8l2 2h10v15H1z" fill="#e7a712"/><path d="M1 5h20v13H1z" fill="#ffd86b"/><path d="M4 11h14v8h-4v-4H8v4H4z" fill="#3d95d7"/></svg></button>
    <button aria-label="Store"><svg width="22" height="24"><path d="M6 5V1h10v4" fill="none" stroke="#22b2ee" stroke-width="2"/><path d="M0 5h22v15q0 3-3 3H3q-3 0-3-3z" fill="#f5f5f5"/><path d="M7 9h4v4H7z" fill="#f05022"/><path d="M12 9h4v4h-4z" fill="#7eb900"/><path d="M7 14h4v4H7z" fill="#00a3ee"/><path d="M12 14h4v4h-4z" fill="#feb800"/></svg></button>
    <button aria-label="Mail"><svg width="24" height="22"><path d="M0 8l12-8 12 8v14H0z" fill="#0b4c98"/><path d="M2 7h20v8H2z" fill="#eee"/><path d="M0 7l12 8 12-8v15H0z" fill="#31a9e8"/><path d="M24 7v15H2z" fill="#148bd8"/></svg></button>
    <button class="running" aria-label="Brave"><svg width="20" height="24"><path d="M4 0h12l4 5-1 3-3 12-6 4-6-4L1 8 0 5z" fill="#f2491d"/><path d="M5 5l5-1 5 1 2 3-3 6-1 2-3 2-3-2-1-2-3-6z" fill="#fff"/><path d="M6 8l3 1-1 3zM14 8l-3 1 1 3zM8 15l2-1 2 1-2 2z" fill="#f2491d"/></svg></button>
    <button aria-label="Edge"><svg width="24" height="24"><circle cx="12" cy="12" r="12" fill="url(#edgeBlue)"/><path d="M1 8C4-2 22-3 24 10c0 5-5 6-9 4 2-4 0-7-5-7-4 0-7 2-9 6z" fill="url(#edgeGreen)"/><path d="M11 9c-5 4-2 11 4 12 4 0 6-2 7-3-5 2-11 0-10-5 0-2 2-2 1-4z" fill="#20364c"/><path d="M1 10c3-4 10-4 11-1-5 2-5 9-1 14C3 22-1 16 1 10z" fill="#1a91cf"/></svg></button>
    <button class="active" aria-label="Fusion 360"><svg width="23" height="24"><path fill="#fbe6d3" d="M0 0h23v24H0z"/><path fill="#fff4ea" d="M0 14L23 2v8L0 22z"/><path fill="#c87d2d" d="M6 4l12-1v4h-7v3h5v4h-5v6H6z"/><path fill="#8d4c16" d="M6 4l3 2v14H6z"/><path d="M13 20h6v2h-6z" fill="#e8b98e"/></svg></button>
    <button aria-label="AutoCAD"><svg width="23" height="24"><path fill="#f9e7e2" d="M0 0h23v24H0z"/><path fill="#fff7f4" d="M0 16L23 2v9L0 24z"/><path fill="#bb1e2c" d="M3 20L10 2h5l5 18h-5l-1-4H9l-2 4zM10 12h3l-1-5z"/><path fill="#831623" d="M13 2h2l5 18h-3z"/></svg></button>
    <button aria-label="Revit"><svg width="23" height="24"><path fill="#e5effa" d="M0 0h23v24H0z"/><path fill="#fff" d="M0 16L23 2v9L0 24z"/><path fill="#2e6db5" d="M5 3h9c6 0 6 8 1 9l5 8h-5l-5-7v7H5zM10 6v4h3c2 0 2-4 0-4z"/><path fill="#173d78" d="M5 3l3 2v15H5z"/></svg></button>
    <button class="ps" aria-label="Photoshop"><span>Ps</span></button>
  </nav>
  <div class="tray">
    <button class="weather"><svg width="18" height="18"><path d="M10 0c9 3 9 14 2 17C7 19 2 16 0 12c7 2 12-4 10-12z" fill="#fdd11c"/><path d="M10 0c9 3 9 14 2 17 4-5 3-12-2-17z" fill="#ffe773"/></svg><span>43°F</span><span>Clear</span></button>
    <div class="status">
      <svg width="16" height="16"><path fill="#1d1f1b" d="M0 0h16v16H0z"/><path d="M2 8c3-5 9-4 11 0-3 4-8 4-11 0z" fill="none" stroke="#74b52b"/><circle cx="7.500" cy="8" r="2" fill="#74b52b"/><path d="M9 4h4v7H9z" fill="#74b52b" opacity=".7"/></svg>
      <svg width="16" height="16"><path d="M1 14L5 3l4 2-4 9z" fill="#2a9c6c"/><path d="M6 13l6-5 2 5-3 1z" fill="#3378c9"/><circle cx="10.500" cy="5" r="4.500" fill="#f36e4b"/><circle cx="10.500" cy="5" r="2.200" fill="#fce0d0"/></svg>
      <svg width="16" height="16"><circle cx="8" cy="8" r="8" fill="#195384"/><path d="M0 9l6 3" stroke="#eee" stroke-width="3"/><circle cx="6" cy="11.500" r="2" fill="none" stroke="#fff"/><circle cx="11" cy="6" r="3" fill="none" stroke="#fff" stroke-width="1.500"/><path d="M8 7l-2 3 3 1 2-2z" fill="#fff"/></svg>
      <svg width="16" height="16"><path fill="#e57325" d="M0 0h16v16H0z"/><path d="M8 2c2 2-2 3 0 6M10 4c-2 1 0 2-1 4M4 9h7c3 0 2 2 0 2M5 11h5M3 13h9" fill="none" stroke="#fff"/></svg>
      <svg width="16" height="16" fill="none" stroke="#fff"><path d="M2.500 5.500h8v6h-8zM10.500 7.500l3-2v6l-3-2M4 2c2-2 6-2 8 0M4 15c2 1 6 1 8 0"/></svg>
      <svg width="16" height="16"><path d="M8 0l7 2v6c0 4-4 6-7 8-3-2-7-4-7-8V2z" fill="#fff"/><path d="M8 0v16M1 7h14" stroke="#1c2a40"/><path d="M11 7l5 9H6z" fill="#fdbc12"/><path d="M11 10v3M11 14v1" stroke="#222"/></svg>
      <svg width="16" height="16"><rect x="2" width="12" height="16" rx="6" fill="#0e83f4"/><path d="M5 5l6 6-3 2V3l3 2-6 6" fill="none" stroke="#fff"/></svg>
      <svg width="16" height="16" fill="none" stroke="#ddd"><path d="M2 14C2 8 6 3 14 3M5 14c0-4 3-8 9-8M8 14c0-3 2-5 6-5M11 14c0-1 1-2 3-2"/></svg>
      <svg width="18" height="16" fill="none" stroke="#fff"><path d="M1.500 5.500H4L7.500 2v12L4 10.500H1.500zM10 6c1 1 1 3 0 4M12 4c2 2 2 6 0 8M14 2.500c3 3 3 8 0 11"/></svg>
    </div>
    <button class="lang">ENG</button>
    <button class="clock"><span>2:34 AM</span><span>2/17/2022</span></button>
    <button class="notes" aria-label="Action center"><svg width="17" height="17"><path d="M1.500 1.500h14v11h-5l-2.500 3-2.500-3h-4z" fill="none" stroke="#fff"/></svg></button>
  </div>
</div>
</body>
</html>
```
FILE: styles.css
```css
* { box-sizing: border-box; }

body {
  margin: 0;
  min-height: 100vh;
  display: flex;
  flex-direction: column;
  background: #fff;
  color: #333;
  font: 11px/16px Roboto, "Liberation Sans", sans-serif;
}

h1, h2, ul { margin: 0; padding: 0; font-weight: 400; }
ul { list-style: none; }
svg { display: block; flex: none; }

button {
  display: flex;
  align-items: center;
  justify-content: center;
  margin: 0;
  padding: 0;
  border: 0;
  background: none;
  color: inherit;
  font: inherit;
}

.defs { position: absolute; width: 0; height: 0; }

/* Title bar */
.titlebar {
  display: flex;
  align-items: center;
  height: 23px;
  padding: 0 2px;
  color: #000;
}
.titlebar h1 {
  margin-left: 5px;
  font: 11px/16px "Noto Sans", sans-serif;
}
.window-controls { display: flex; margin-left: auto; padding-bottom: 3px; }
.window-controls button { width: 46px; height: 20px; }

/* Quick access and document tab */
.appbar { display: flex; height: 31px; background: #cacaca; }
.quick {
  display: flex;
  align-items: center;
  width: 193px;
  padding-left: 9px;
  gap: 19px;
  color: #666;
}
.quick button { gap: 6px; }
.quick .dim { margin-left: -7px; color: #999; }
.doc-tab {
  flex: 1;
  display: flex;
  align-items: center;
  margin-top: 4px;
  padding-right: 6px;
  border-radius: 4px 4px 0 0;
  background: #f1f1f1;
}
.doc-name {
  flex: 1;
  display: flex;
  justify-content: center;
  align-items: center;
  gap: 5px;
  font: 12px/16px "Liberation Sans", Arial, sans-serif;
}
.new-tab {
  width: 28px;
  margin: 4px 0 0 4px;
  border-radius: 4px 4px 0 0;
  background: #b9b9b9;
}
.account {
  display: flex;
  align-items: center;
  gap: 17px;
  padding: 0 13px 0 12px;
}
.account button:last-child { margin-left: 4px; }

/* Ribbon */
.ribbon {
  display: flex;
  height: 83px;
  padding-left: 11px;
  border-bottom: 1px solid #d9d9d9;
  background: #f1f1f1;
}
.workspace {
  width: 111px;
  height: 62px;
  margin-top: 11px;
  gap: 6px;
  border: 2px solid #dedede;
  border-radius: 5px;
  font-weight: 700;
}
.tabs { display: flex; gap: 21px; padding-left: 16px; }
.tabs button {
  height: 25px;
  padding: 3px 12px 0;
  border-bottom: 3px solid transparent;
}
.tabs .current { border-color: #0696d7; color: #0696d7; }
.groups { display: flex; padding-left: 4px; }
.group {
  padding: 0 6px 0 8px;
  border-right: 2px solid #dedede;
  height: 54px;
}
.wide { padding: 0 9px 0 10px; }
.pair { padding: 0 7px 0 8px; }
.last { border: 0; padding-left: 7px; }
.tools { display: flex; gap: 5px; }
.tools button { width: 38px; height: 38px; }
.tools .chosen { background: #0696d7; }
.menu { width: 100%; gap: 3px; height: 20px; }

/* Canvas */
.viewport {
  position: relative;
  flex: 1;
  display: flex;
  flex-direction: column;
  justify-content: space-between;
}
.model { position: absolute; inset: 0; width: 100%; height: 100%; }
.viewcube { position: absolute; top: 23px; right: 15px; }
.cube-face { font: 700 11px "Open Sans", sans-serif; fill: #969ba1; }
.axis-z { font: 14px Roboto, sans-serif; fill: #8080f5; }
.axis-x { font: 14px Roboto, sans-serif; fill: #f49090; }

.browser { position: relative; width: 304px; padding: 4px 0 0 4px; }
.panel-head {
  display: flex;
  align-items: center;
  height: 25px;
  padding-left: 4px;
  border: 1px solid #c8c8c8;
  background: #f1f1f1;
}
.panel-head h2 { flex: 1; margin-left: 9px; font-size: 11px; color: #666; }
.grip {
  width: 4px;
  height: 11px;
  margin-left: 6px;
  border: solid #888;
  border-width: 0 1px;
}
.tree {
  display: grid;
  gap: 4px;
  margin-top: 5px;
  padding-left: 36px;
  font: 11px/16px "Liberation Sans", Arial, sans-serif;
}
.tree li { display: flex; align-items: center; gap: 8px; height: 20px; }
.tree .root { margin-left: -20px; }
.node {
  display: flex;
  align-items: center;
  gap: 14px;
  height: 20px;
  padding: 0 10px 0 3px;
  background: #f1f1f1;
}
.node svg + svg { margin-left: -5px; }
.root .node { gap: 4px; padding-right: 8px; }
.root strong {
  display: flex;
  align-items: center;
  gap: 14px;
  height: 16px;
  margin-left: 2px;
  padding: 0 12px 0 3px;
  background: #999;
  color: #fff;
}

.bottom {
  position: relative;
  display: grid;
  grid-template-columns: 1fr auto 1fr;
  align-items: end;
  padding-bottom: 4px;
}
.comments {
  width: 300px;
  margin-left: 4px;
  padding: 2px 0 0 15px;
  border-top: 0;
}
.navbar {
  display: flex;
  align-items: center;
  gap: 6px;
  height: 24px;
  padding: 0 4px 0 3px;
  background: #f1f1f1;
}
.navbar button { gap: 1px; }
.navbar .spaced, .navbar .fit { gap: 3px; }
.navbar button:nth-child(3), .navbar button:nth-child(4), .navbar .fit { margin-left: 2px; }

/* Timeline */
.timeline {
  display: flex;
  align-items: center;
  height: 50px;
  padding: 0 13px 0 4px;
  border-top: 2px solid #ccc;
  background: #f1f1f1;
}
.playback { display: flex; }
.playback button { width: 25px; height: 24px; }
.features { position: relative; margin-left: 13px; padding-top: 8px; }
.steps { display: flex; }
.steps button { width: 24px; height: 18px; margin-bottom: 2px; }
.playhead { position: absolute; left: 90px; top: 2px; }
.settings { margin-left: auto; }

/* Windows taskbar */
.taskbar {
  display: flex;
  height: 40px;
  background: linear-gradient(90deg, #22383f 0%, #21373f 45%, #1a2b40 75%, #1a2744 100%);
  color: #fff;
  font: 13px/18px "Open Sans", sans-serif;
}
.start { width: 48px; }
.search {
  display: flex;
  align-items: center;
  gap: 10px;
  width: 344px;
  padding-left: 12px;
  border: 1px solid #bbb;
  background: #f1f1f1;
}
.search input {
  flex: 1;
  min-width: 0;
  padding: 1px 0 0;
  border: 0;
  background: none;
  font: 14px/20px "Open Sans", sans-serif;
}
.search input::placeholder { color: #333; opacity: 1; }
.apps { display: flex; gap: 1px; }
.apps button { width: 48px; }
.running { background: linear-gradient(#76b9ed, #76b9ed) bottom / 40px 2px no-repeat; }
.apps .active { background: linear-gradient(#76b9ed, #76b9ed) bottom / 100% 2px no-repeat, #4d5f66; }
.ps span {
  width: 22px;
  height: 22px;
  border: 1px solid #22b9f5;
  background: #001e2b;
  color: #22b9f5;
  font: 700 12px/18px "Open Sans", sans-serif;
}
.tray {
  display: flex;
  align-items: center;
  margin: 0 4px 0 auto;
  padding-right: 5px;
  border-right: 1px solid #59667a;
}
.weather { gap: 9px; margin-right: 14px; padding-top: 1px; }
.weather svg { margin-right: 2px; }
.status { display: flex; gap: 8px; }
.lang { margin-left: 9px; font-size: 11px; }
.clock {
  flex-direction: column;
  width: 78px;
  font-size: 11px;
}
.notes { width: 26px; margin-right: 10px; }
```
